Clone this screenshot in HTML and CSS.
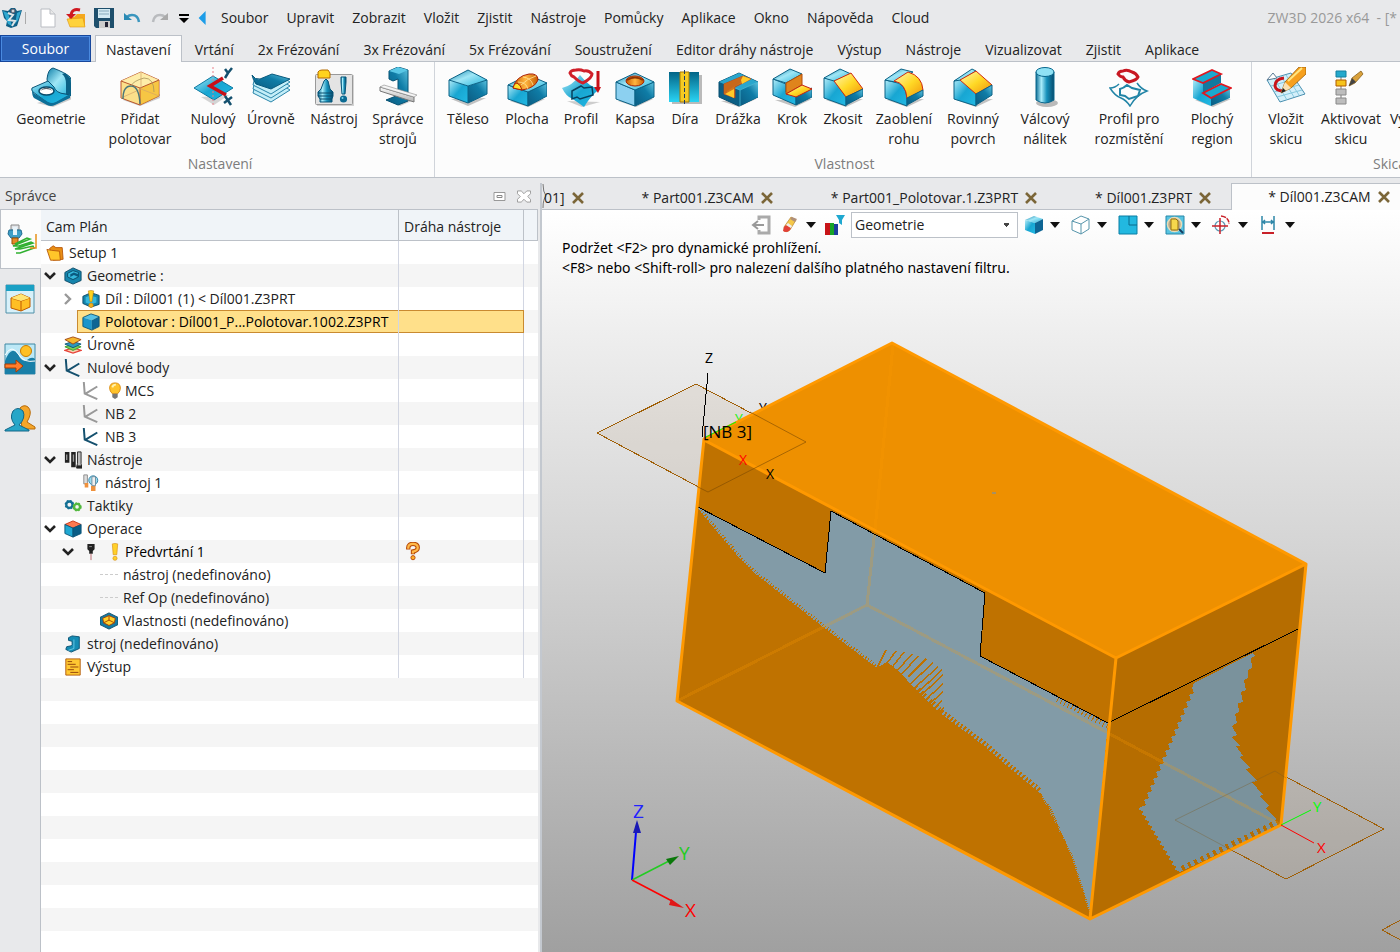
FILE: index.html
```html
<!DOCTYPE html>
<html lang="cs">
<head>
<meta charset="utf-8">
<title>ZW3D 2026 x64</title>
<link rel="stylesheet" href="styles.css">
</head>
<body>
<svg class="defs" aria-hidden="true">
  <defs>
    <linearGradient id="gt" x1="0" y1="0" x2="1" y2="1"><stop offset="0" stop-color="#0f7fa8"/><stop offset=".45" stop-color="#9fe6f6"/><stop offset="1" stop-color="#22b4dc"/></linearGradient>
    <linearGradient id="gl" x1="0" y1="0" x2="1" y2="1"><stop offset="0" stop-color="#b4ecf8"/><stop offset=".5" stop-color="#18a6d2"/><stop offset="1" stop-color="#22b9e4"/></linearGradient>
    <linearGradient id="gr" x1="0" y1="1" x2="1" y2="0"><stop offset="0" stop-color="#0b5c82"/><stop offset=".6" stop-color="#0f7ca6"/><stop offset="1" stop-color="#5ec4e0"/></linearGradient>
    <linearGradient id="gy" x1="0" y1="0" x2="1" y2="1"><stop offset="0" stop-color="#fff6b8"/><stop offset=".5" stop-color="#ffd926"/><stop offset="1" stop-color="#f0900a"/></linearGradient>
    <linearGradient id="go" x1="0" y1="0" x2="1" y2="0"><stop offset="0" stop-color="#c85a00"/><stop offset=".5" stop-color="#ffb640"/><stop offset="1" stop-color="#c65a00"/></linearGradient>
    <linearGradient id="gcyl" x1="0" y1="0" x2="1" y2="0"><stop offset="0" stop-color="#0f6e96"/><stop offset=".3" stop-color="#a8ecfa"/><stop offset=".6" stop-color="#1590ba"/><stop offset="1" stop-color="#074c6e"/></linearGradient>
    <linearGradient id="gv" x1="0" y1="0" x2="0" y2="1"><stop offset="0" stop-color="#036486"/><stop offset="1" stop-color="#2ad4f4"/></linearGradient>
    <linearGradient id="gm" x1="0" y1="0" x2="0" y2="1"><stop offset="0" stop-color="#fafafa"/><stop offset="1" stop-color="#b4b4b4"/></linearGradient>

    <symbol id="i-geom" viewBox="0 0 40 40"><path d="M6 36l16 4 19-8-3-5z" fill="#999" opacity=".5"/><path d="M16 12Q17 2 22 1q13 5 17 9 2 3 1 18l-14-2-9-8z" fill="url(#gt)" stroke="#0b5678"/><path d="M34 6q6 4 6 10v13l-5 2V17q0-7-4-10z" fill="#0a6186"/><path d="M1 21l16-7 6 6q2 6 11 7l5 1-14 8q-4 2-8 0L2 25q-2-2-1-4z" fill="url(#gl)" stroke="#0b5678"/><path d="M1 23q1 3 3 4l13 8q4 2 8 0l14-8v4l-15 7q-4 2-8 0L3 31q-2-2-2-8z" fill="#0d6f98"/><ellipse cx="15.500" cy="24" rx="7.500" ry="4" fill="#fff" stroke="#084a6a" stroke-width="1.500"/><path d="M9 24q6-7 13 0-7-4-13 0z" fill="#55606a"/></symbol>
    <symbol id="i-stock" viewBox="0 0 40 40"><path d="M3 33l17 6 20-8v-4z" fill="#999" opacity=".5"/><path d="M1 14L21 5l18 8v16l-19 9L1 31z" fill="#fbe08a" stroke="#b9552c"/><path d="M20 21l19-8v16l-19 9z" fill="#f4bd2c" opacity=".75"/><path d="M1 14L21 5l18 8-19 8z" fill="#fff0b0" opacity=".8"/><path d="M1 14l19 7 19-8M20 21v17" fill="none" stroke="#b9552c"/><path d="M21 5v17L1 31M21 22l18 7" fill="none" stroke="#d6a468" stroke-width=".7"/><path d="M3 32q0-13 8-13t9 18" fill="none" stroke="#49777a" stroke-width="1.400"/><path d="M11 19q2-5 13-8 10 0 10 14" fill="none" stroke="#a8945c" stroke-width=".8"/></symbol>
    <symbol id="i-datum" viewBox="0 0 40 40"><path d="M8 30l13 8 15-10z" fill="#999" opacity=".4"/><path d="M1 21L20 9l20 12-19 12z" fill="url(#gl)" stroke="#0d7aa2"/><path d="M20 0v40" stroke="#e9808a" stroke-dasharray="2 2"/><path d="M30 11L17 19l16 9" fill="none" stroke="#c81018" stroke-width="3.500"/><path d="M32 2l3 4 4-5M35 6l-3 5M32 29l6 9M39 30l-8 6" fill="none" stroke="#14506e" stroke-width="2.500"/></symbol>
    <symbol id="i-levels" viewBox="0 0 40 40"><g stroke="#2a85aa" fill="#c4eef8"><path d="M2 26l18 9 19-12-3-2-33 1z"/><path d="M2 22l18 9 19-12-3-2-33 1z"/><path d="M2 18l18 9 19-12-3-2-33 1z"/></g><path d="M1 8q3 5 8 4l12-5 18 5-19 10L5 17Q2 13 1 8z" fill="url(#gr)" stroke="#0a5a7d"/></symbol>
    <symbol id="i-tool" viewBox="0 0 40 40"><rect x="3" y="8" width="37" height="31" fill="#aaa" opacity=".5"/><rect x="1.500" y="7.500" width="37" height="30" rx="1" fill="#e4e4e4" stroke="#999"/><path d="M10 14l2-2 2 2 2 8 3 3v4l-1 3v3H6v-3l-2-3v-4l3-3z" fill="url(#gcyl)" stroke="#07567a"/><path d="M4 26h15M4 29h15M6 32h12" stroke="#0a4c6c"/><path d="M4 5q1-2 4-2h6l2 3v5H4z" fill="#ffd21e" stroke="#b66c00"/><path d="M27 10h5v5l-1 12h-3l-1-12z" fill="url(#gcyl)" stroke="#07567a"/><circle cx="29.500" cy="32" r="3.600" fill="#0c6a92"/><circle cx="28.500" cy="31" r="1" fill="#7cd6ee"/></symbol>
    <symbol id="i-machine" viewBox="0 0 40 40"><path d="M8 33l14 6 14-6z" fill="#999" opacity=".5"/><path d="M11 4l9-4 10 3v31l-10 4-12-5 10-4 2-2V12l-5 2-4-2z" fill="url(#gr)" stroke="#075274"/><path d="M11 4l9-4 10 3-9 4z" fill="#5ac8e6"/><path d="M2 20l34 10v5L2 24z" fill="url(#gm)" stroke="#777"/><path d="M2 20l4-2 33 10-3 2z" fill="#f5f5f5" stroke="#888" stroke-width=".6"/></symbol>

    <symbol id="i-box" viewBox="0 0 40 40"><path d="M3 32l17 7 18-8z" fill="#888" opacity=".5"/><path d="M1 13v16l19 7V19z" fill="url(#gl)"/><path d="M20 19v17l19-9V13z" fill="url(#gr)"/><path d="M1 13L20 3l19 10-19 6z" fill="url(#gt)"/><path d="M1 13L20 3l19 10v14l-19 9-19-7zl19 6 19-6M20 19v17" fill="none" stroke="#0b6286"/></symbol>
    <symbol id="i-surface" viewBox="0 0 40 40"><path d="M3 34l18 6 17-8z" fill="#888" opacity=".5"/><path d="M1 18v14l20 7V25z" fill="url(#gl)" stroke="#0b6286"/><path d="M21 25v14l19-10V16z" fill="url(#gr)" stroke="#0b6286"/><path d="M1 18L21 8l19 8-19 9z" fill="url(#gt)" stroke="#0b6286"/><path d="M6 21Q9 9 22 7q9-1 9 6-3 8-16 10z" fill="url(#go)" stroke="#aa1f08"/><path d="M11 15q8 0 10 7M16 10q8 1 10 8M14 18q7-7 15-9" fill="none" stroke="#ffe49a" stroke-width=".8"/><path d="M6 21q1-5 4-5 4 2 5 7z" fill="#ffe228" stroke="#aa1f08"/></symbol>
    <symbol id="i-profile" viewBox="0 0 40 40"><path d="M6 34l15 6 18-5z" fill="#888" opacity=".4"/><path d="M1 21q10-2 18-13 10 13 20 14-8 5-16 18-8-6-13-9-5-2-9-10z" fill="url(#gl)"/><path d="M11 24l9-5 3 2 8-1 1 8-13 4-3-2-5 2z" fill="none" stroke="#07405e" stroke-width="1.500"/><path d="M15 3q-5 0-6 3 1 3 4 4 5 5 9 6 9-5 9-9-3-4-8-3-4-2-8-1z" fill="none" stroke="#d0202a" stroke-width="3"/><path d="M37 4v18" stroke="#c81018" stroke-width="3"/><path d="M33 20h7l-3 6z" fill="#c81018"/></symbol>
    <symbol id="i-pocket" viewBox="0 0 40 40"><path d="M3 34l18 6 17-8z" fill="#888" opacity=".5"/><path d="M1 15v17l19 7V23z" fill="#8cd0f0" stroke="#0b6286"/><path d="M20 23v16l19-9V15z" fill="url(#gr)" stroke="#0b6286"/><path d="M1 15L20 6l19 9-19 8z" fill="url(#gt)" stroke="#0b6286"/><ellipse cx="20" cy="14" rx="9" ry="5" fill="url(#go)" stroke="#a82000"/><path d="M12 13q8-5 16 0" fill="none" stroke="#8e3300" stroke-width="2"/></symbol>
    <symbol id="i-hole" viewBox="0 0 40 40"><path d="M7 8h30v29H7z" fill="#777" opacity=".5"/><path d="M4 5h30v30H4z" fill="url(#gv)"/><path d="M15 5h9v30h-9z" fill="#f5ca22" stroke="#a87900"/><path d="M19.500 3v35" stroke="#1d3a64" stroke-dasharray="4 2"/></symbol>
    <symbol id="i-slot" viewBox="0 0 40 40"><path d="M3 34l18 6 17-8z" fill="#888" opacity=".5"/><path d="M1 15L21 6l19 9v15l-19 9-20-9z" fill="#0b5f84" stroke="#084f70"/><path d="M1 15L21 6l19 9-18 8-6-2V31l-10-4V17z" fill="#2aa6cc"/><path d="M22 23l18-8v15l-18 9z" fill="url(#gr)"/><path d="M6 17l19-8 8 3-16 8v11L6 27z" fill="#d0751c" stroke="#b5401a" stroke-width=".8"/><path d="M6 17l19-8v5L9 24v4l-3-1z" fill="#c8681a"/><path d="M7 27l9-5v9zM25 9l8 3-9 5-1-4z" fill="#ffc928"/><path d="M22 23v16M17 21l5 2 18-8" fill="none" stroke="#4cbcd8" stroke-width=".8"/></symbol>
    <symbol id="i-step" viewBox="0 0 40 40"><path d="M3 33l20 7 17-8z" fill="#888" opacity=".5"/><path d="M1 12v16l23 10v-9L14 25V17z" fill="url(#gl)" stroke="#0b6286"/><path d="M1 12L18 2l12 5-16 9z" fill="url(#gt)" stroke="#0b6286"/><path d="M24 29v9l16-8v-9z" fill="url(#gr)" stroke="#0b6286"/><path d="M14 16l16-9v11l-16 9z" fill="#df841c" stroke="#b44c08"/><path d="M14 27l16-9 10 4-16 8z" fill="url(#gy)" stroke="#c52010"/></symbol>
    <symbol id="i-chamfer" viewBox="0 0 40 40"><path d="M3 33l20 7 17-8z" fill="#888" opacity=".5"/><path d="M1 11v20l22 8v-9L11 13z" fill="url(#gl)" stroke="#0b6286"/><path d="M1 11L17 2l11 5-17 7z" fill="url(#gt)" stroke="#0b6286"/><path d="M11 14l17-8 12 16-17 8z" fill="url(#gy)" stroke="#d02a10"/><path d="M23 30l17-8v7l-17 9z" fill="url(#gr)" stroke="#0b6286"/></symbol>
    <symbol id="i-fillet" viewBox="0 0 40 40"><path d="M3 33l20 7 17-8z" fill="#888" opacity=".5"/><path d="M1 13v18l22 8v-9q-2-14-13-15z" fill="url(#gl)" stroke="#0b6286"/><path d="M1 13L17 2l12 3-18 10z" fill="url(#gt)" stroke="#0b6286"/><path d="M10 14l14-9q14 4 15 18l-16 9q-1-16-13-18z" fill="url(#gy)" stroke="#d02a10"/><path d="M23 31l16-8v6l-16 9z" fill="url(#gr)" stroke="#0b6286"/></symbol>
    <symbol id="i-plane" viewBox="0 0 40 40"><path d="M3 33l20 7 17-8z" fill="#888" opacity=".5"/><path d="M1 14v18l22 7V26L8 11z" fill="url(#gl)" stroke="#0b6286"/><path d="M1 14L19 2l4 2L8 13z" fill="url(#gt)" stroke="#0b6286"/><path d="M7 13L23 4l16 14-16 9z" fill="url(#gy)" stroke="#d02a10"/><path d="M23 27l16-9v10l-16 10z" fill="url(#gr)" stroke="#0b6286"/></symbol>
    <symbol id="i-boss" viewBox="0 0 40 40"><ellipse cx="22" cy="36" rx="11" ry="4" fill="#777" opacity=".5"/><path d="M11 5v28q9 6 18 0V5z" fill="url(#gcyl)" stroke="#08668c"/><ellipse cx="20" cy="5" rx="9" ry="4.500" fill="#8fe2f5" stroke="#08668c"/></symbol>
    <symbol id="i-pattern" viewBox="0 0 40 40"><path d="M10 17q-4 4-9 4 5 8 11 10 5 2 9 8 6-11 17-15-6-2-10-8" fill="none" stroke="#2184a6" stroke-width="1.500"/><path d="M11 22q4-1 7-4l5 3 8 2-2 6-9 3-4-3-5-1z" fill="none" stroke="#2184a6" stroke-width="2"/><path d="M14 4q-4 0-5 3 2 3 5 3 2 4 6 5 8-2 9-5-2-4-6-5-5-3-9-1z" fill="none" stroke="#c81822" stroke-width="3"/></symbol>
    <symbol id="i-flat" viewBox="0 0 40 40"><path d="M3 33l18 7 18-8z" fill="#888" opacity=".5"/><path d="M1 12v19l18 8v-9l-8-4V16z" fill="url(#gl)"/><path d="M19 30v9l19-8V21z" fill="url(#gr)"/><path d="M11 16l18-9v9L11 26z" fill="#12799f"/><path d="M1 12L20 3l9 4-18 9zM11 26l18-9 10 4-20 10z" fill="#1aa9cf" stroke="#e01820" stroke-width="1.800"/></symbol>
    <symbol id="i-sketch" viewBox="0 0 40 40"><path d="M1 13l24-7 14 21-25 8z" fill="#d4effa" stroke="#4a90b0"/><path d="M5 19l24-7M8 25l25-7M11 30l25-7M8 11l13 22M15 9l13 21M20 8l13 20" stroke="#86c8de" fill="none"/><path d="M1 13l6-7 4 5z" fill="#fff" stroke="#5a7a94"/><path d="M18 11q-9 1-9 8 1 5 8 5" fill="none" stroke="#c8141c" stroke-width="3"/><path d="M15 26l4-11L33 0h7v7L25 21z" fill="#f6a01e" stroke="#8c5200" stroke-width=".7"/><path d="M19 15l6 6-10 5z" fill="#fbe1b2"/><path d="M15 26l2-5 3 3z" fill="#222"/><path d="M22 14L36 1" stroke="#ffe680" stroke-width="2"/></symbol>
    <symbol id="i-activate" viewBox="0 0 40 40"><path d="M10 8v26" stroke="#777"/><path d="M5 4h10v6H5z" fill="#25a9cc" stroke="#1580a0"/><path d="M5 13h10v6H5z" fill="#f6c41c" stroke="#b05a00"/><path d="M5 22h10v6H5zM5 31h10v6H5z" fill="#bdbdbd" stroke="#888"/><path d="M18 19l3-8 9-7 2 3-8 9z" fill="#d9a13c" stroke="#7c5410" stroke-width=".7"/><path d="M18 19l3-8 4 4z" fill="#444"/></symbol>

    <symbol id="s-folder" viewBox="0 0 20 20"><path d="M4 5l4-3 3 2h7l1 13-11 1z" fill="#e88e14" stroke="#b8580a"/><path d="M1 6l5 1 9 1 1 10H5z" fill="#ffc62a" stroke="#b8580a"/></symbol>
    <symbol id="s-part" viewBox="0 0 20 20"><path d="M1 6l9-5 9 4v10l-9 4-9-4z" fill="#1584ac" stroke="#0a4865"/><path d="M4 7l6-3 6 2v5l-6 3-6-3z" fill="#36b8dc" stroke="#0a4865"/><path d="M7 8l4-2 5 2v3l-5-2-4 2z" fill="#0a5a80"/></symbol>
    <symbol id="s-warnpart" viewBox="0 0 20 20"><path d="M1 7l9-4 9 3v10l-9 3-9-4z" fill="#1584ac" stroke="#0a4865"/><path d="M4 8l5-2 7 2v6l-6 2-6-2z" fill="#36b8dc"/><path d="M7 1q3-1 6 0l-2 12H9z" fill="#ffd21e" stroke="#c07a00" stroke-width=".6"/><circle cx="10" cy="17" r="2.500" fill="#f3b01c" stroke="#c07a00" stroke-width=".6"/></symbol>
    <symbol id="s-cube" viewBox="0 0 20 20"><path d="M1 5l9-4 9 3-8 4z" fill="#56c1e6"/><path d="M1 5l10 3v11L1 15z" fill="#1a95cc"/><path d="M11 8l8-4v11l-8 4z" fill="#0d6594"/><path d="M1 5l9-4 9 3v11l-8 4-10-4z" fill="none" stroke="#0b5578"/></symbol>
    <symbol id="s-levels" viewBox="0 0 20 20"><path d="M1 16l9-3 9 3-9 3z" fill="#f8d0b0" stroke="#e8443a" stroke-width="1.500"/><path d="M1 12l9-3 9 3-9 4z" fill="#7ad05c" stroke="#3a9a2c"/><path d="M1 9l9-3 9 3-9 4z" fill="#2c98c0" stroke="#0e5878"/><path d="M1 4l9-3 9 3-9 5z" fill="#f5b62e" stroke="#a04410"/></symbol>
    <symbol id="s-axis" viewBox="0 0 20 20"><path d="M2 0l1 13 14 6M4 13l13-8" fill="none" stroke="currentColor" stroke-width="2.200"/></symbol>
    <symbol id="s-bulb" viewBox="0 0 14 20"><path d="M7 1q6 0 6 6 0 3-3 6H4Q1 10 1 7q0-6 6-6z" fill="#ffc32a" stroke="#d98a10"/><path d="M4 6q1-3 4-3" stroke="#fff2b0" stroke-width="2" fill="none"/><path d="M4 13h6v4l-3 2-3-2z" fill="#777"/></symbol>
    <symbol id="s-tools" viewBox="0 0 20 20"><path d="M1 1h5v12H1zM8 1h5v17H8z" fill="#222"/><path d="M3 4v6M10.500 4v8" stroke="#999" stroke-width="1.500"/><path d="M15 1h4v13l1 5h-6l1-5z" fill="#bbb" stroke="#222"/><path d="M14 16h6v3h-6z" fill="#222"/></symbol>
    <symbol id="s-tool" viewBox="0 0 20 20"><path d="M2 1h4v10H2z" fill="#ddd" stroke="#888"/><path d="M3 10h4v5H3zM10 13h5v6h-5z" fill="#ef913c"/><circle cx="12.500" cy="7" r="5" fill="#9cdcf0" stroke="#2a7da4"/><path d="M11 3h4v10h-4z" fill="#eee" stroke="#6a8a9c"/></symbol>
    <symbol id="s-gears" viewBox="0 0 20 20"><circle cx="6" cy="8.500" r="3.500" fill="none" stroke="#147094" stroke-width="2.600"/><circle cx="6" cy="8.500" r="4.600" fill="none" stroke="#147094" stroke-width="1.400" stroke-dasharray="2 1.600"/><circle cx="14.500" cy="11" r="3.300" fill="none" stroke="#52b83e" stroke-width="2.600"/><circle cx="14.500" cy="11" r="4.400" fill="none" stroke="#52b83e" stroke-width="1.400" stroke-dasharray="2 1.600"/></symbol>
    <symbol id="s-oper" viewBox="0 0 20 20"><path d="M1 5l9-4 9 4-9 4z" fill="#ff7a50" stroke="#c8300e"/><path d="M1 5l9 4v10l-9-4z" fill="#20a8d2" stroke="#0b5578"/><path d="M10 9l9-4v10l-9 4z" fill="#0a5d86" stroke="#0b5578"/></symbol>
    <symbol id="s-drill" viewBox="0 0 20 20"><path d="M6 1h8v6l-2 2v3H8V9L6 7z" fill="#222"/><path d="M8 4h3" stroke="#999"/><path d="M10 12v7" stroke="#b86066"/></symbol>
    <symbol id="s-excl" viewBox="0 0 10 20"><path d="M2 1q3-1 6 0L7 13H3z" fill="#ffd02a" stroke="#d99010" stroke-width=".7"/><circle cx="5" cy="17" r="2.300" fill="#ffd02a" stroke="#d99010" stroke-width=".7"/></symbol>
    <symbol id="s-feat" viewBox="0 0 20 20"><path d="M0 6l10-5 10 5v8l-10 5-10-5z" fill="#147ba4" stroke="#0a4865"/><path d="M3 7l7-3 7 3-1 5-6 3-6-3z" fill="#ffd028" stroke="#a03c00"/><path d="M4 12l6-3 6 3M10 4v5" fill="none" stroke="#a03c00"/></symbol>
    <symbol id="s-mach" viewBox="0 0 20 20"><path d="M5 3l4-2 8 1v13l-9 4-6-3 1-3 5-1 1-1V7L5 6z" fill="#158cb4" stroke="#084f70"/><path d="M11 5v10l-6 2" stroke="#6acbe6" fill="none"/></symbol>
    <symbol id="s-out" viewBox="0 0 20 20"><path d="M2 1h16v18H2z" fill="#ffc832" stroke="#b0580a"/><path d="M4 4h5M4 7h9M7 10h9M4 13h7M7 16h9" stroke="#8c3a08"/></symbol>
    <symbol id="s-quest" viewBox="0 0 16 20"><path d="M3 8V6q0-4 5-4t5 4q0 3-5 4v3" fill="none" stroke="#b84a08" stroke-width="4.600"/><circle cx="8" cy="16.500" r="2.200" fill="#ffb02a" stroke="#b84a08"/><path d="M3 7V6q0-4 5-4t5 4q0 3-5 4v2" fill="none" stroke="#ffb848" stroke-width="2.400"/></symbol>
    <symbol id="s-down" viewBox="0 0 12 8"><path d="M1 1l5 5 5-5" fill="none" stroke="#222" stroke-width="2.600"/></symbol>
    <symbol id="s-right" viewBox="0 0 8 12"><path d="M1 1l5 5-5 5" fill="none" stroke="#999" stroke-width="2.400"/></symbol>
    <symbol id="s-x" viewBox="0 0 12 12"><path d="M1 1l10 10M11 1L1 11" stroke="#7b6638" stroke-width="2.600"/></symbol>
    <symbol id="s-caret" viewBox="0 0 10 6"><path d="M0 0h10L5 6z" fill="#111"/></symbol>
  </defs>
</svg>

<div class="app">
  <header class="titlebar">
    <div class="quick">
      <svg class="logo" viewBox="0 0 20 20"><path d="M0 2l6 1 3-3h4l2 3 5-1-3 10-2 6-6 2-5-2 1-5-3-3z" fill="#0f5f86"/><path d="M1 3l5 2 4 13-4-2zM15 5l4-2-3 9-3 4z" fill="#2fa8d0"/><path d="M6 5l5 2-4 5 6 1-3 5" fill="none" stroke="#dfe4e6" stroke-width="2"/><circle cx="11" cy="3" r="2" fill="#cfd6da" stroke="#556"/></svg>
      <span class="sep"></span>
      <button aria-label="Nový"><svg viewBox="0 0 20 20"><path d="M3 1h9l5 5v13H3z" fill="#fff" stroke="#b9bcc2"/><path d="M12 1v5h5" fill="#e8e8e8" stroke="#b9bcc2"/></svg></button>
      <button aria-label="Otevřít"><svg viewBox="0 0 20 20"><path d="M3 9h5l3-3h8v12H4z" fill="#f5a81e"/><path d="M1 11l16-1 2 9H4z" fill="#ffd23c" stroke="#dc9414" stroke-width=".6"/><path d="M14 2Q6 0 5 7" stroke="#d01820" stroke-width="3" fill="none"/><path d="M0 6h10l-5 5z" fill="#d01820"/></svg></button>
      <button aria-label="Uložit"><svg viewBox="0 0 20 20"><path d="M0 0h20v20H2l-2-2z" fill="#1e4f6c"/><path d="M4 1h12v9H4z" fill="#d4eaf2"/><path d="M5 3h10M5 6h10" stroke="#8ab"/><path d="M5 13h11v7H5z" fill="#ccc"/><path d="M11 14h3v5h-3z" fill="#223"/></svg></button>
      <button aria-label="Zpět"><svg viewBox="0 0 20 20"><path d="M17 14q-1-7-7-7-3 0-5 2" fill="none" stroke="#3a96be" stroke-width="2.500"/><path d="M2 5v7h8z" fill="#2a8ab4"/></svg></button>
      <button aria-label="Znovu"><svg viewBox="0 0 20 20"><path d="M3 14q1-7 7-7 3 0 5 2" fill="none" stroke="#b9bbbe" stroke-width="2.500"/><path d="M18 5v7h-8z" fill="#aaa"/></svg></button>
      <button class="narrow" aria-label="Přizpůsobit panel"><svg viewBox="0 0 12 12"><path d="M1 2h10v2H1zM1 6h10l-5 5z" fill="#000"/></svg></button>
      <button class="narrow" aria-label="Skrýt nabídku"><svg viewBox="0 0 12 16"><path d="M9 0v16L1 8z" fill="#1d9de8"/></svg></button>
    </div>
    <nav class="menu">
      <button>Soubor</button><button>Upravit</button><button>Zobrazit</button><button>Vložit</button><button>Zjistit</button><button>Nástroje</button><button>Pomůcky</button><button>Aplikace</button><button>Okno</button><button>Nápověda</button><button>Cloud</button>
    </nav>
    <div class="title">ZW3D 2026 x64 &nbsp;- [*</div>
  </header>

  <nav class="tabs">
    <button class="file">Soubor</button>
    <button class="active">Nastavení</button><button>Vrtání</button><button>2x Frézování</button><button>3x Frézování</button><button>5x Frézování</button><button>Soustružení</button><button>Editor dráhy nástroje</button><button>Výstup</button><button>Nástroje</button><button>Vizualizovat</button><button>Zjistit</button><button>Aplikace</button>
  </nav>

  <section class="ribbon">
    <div class="group g1">
      <div class="tools">
        <button class="w90"><svg><use href="#i-geom"/></svg>Geometrie</button>
        <button class="w88"><svg><use href="#i-stock"/></svg>Přidat<br>polotovar</button>
        <button class="w58"><svg><use href="#i-datum"/></svg>Nulový<br>bod</button>
        <button class="w58"><svg><use href="#i-levels"/></svg>Úrovně</button>
        <button class="w68"><svg><use href="#i-tool"/></svg>Nástroj</button>
        <button class="w60"><svg><use href="#i-machine"/></svg>Správce<br>strojů</button>
      </div>
      <div class="caption">Nastavení</div>
    </div>
    <div class="group g2">
      <div class="tools">
        <button class="w60"><svg><use href="#i-box"/></svg>Těleso</button>
        <button class="w58"><svg><use href="#i-surface"/></svg>Plocha</button>
        <button class="w50"><svg><use href="#i-profile"/></svg>Profil</button>
        <button class="w58"><svg><use href="#i-pocket"/></svg>Kapsa</button>
        <button class="w42"><svg><use href="#i-hole"/></svg>Díra</button>
        <button class="w64"><svg><use href="#i-slot"/></svg>Drážka</button>
        <button class="w44"><svg><use href="#i-step"/></svg>Krok</button>
        <button class="w58"><svg><use href="#i-chamfer"/></svg>Zkosit</button>
        <button class="w64"><svg><use href="#i-fillet"/></svg>Zaoblení<br>rohu</button>
        <button class="w74"><svg><use href="#i-plane"/></svg>Rovinný<br>povrch</button>
        <button class="w70"><svg><use href="#i-boss"/></svg>Válcový<br>nálitek</button>
        <button class="w98"><svg><use href="#i-pattern"/></svg>Profil pro<br>rozmístění</button>
        <button class="w68"><svg><use href="#i-flat"/></svg>Plochý<br>region</button>
      </div>
      <div class="caption">Vlastnost</div>
    </div>
    <div class="group g3">
      <div class="tools">
        <button class="w60"><svg><use href="#i-sketch"/></svg>Vložit<br>skicu</button>
        <button class="w70"><svg><use href="#i-activate"/></svg>Aktivovat<br>skicu</button>
        <button class="cut">Vy</button>
      </div>
      <div class="caption">Skica</div>
    </div>
  </section>

  <main class="work">
    <aside class="manager">
      <div class="panel-title"><h2>Správce</h2>
        <button aria-label="Plovoucí"><svg viewBox="0 0 16 12"><path d="M2 2h11v8H2z" fill="#fff" stroke="#999"/><path d="M5 5h5v2H5z" fill="none" stroke="#888"/></svg></button>
        <button aria-label="Zavřít"><svg viewBox="0 0 16 14"><path d="M1 1h4l3 3 3-3h4v3l-3 3 3 3v3h-4l-3-3-3 3H1v-3l3-3-3-3z" fill="#fff" stroke="#999"/></svg></button>
      </div>
      <div class="panel-body">
        <nav class="side">
          <button class="on" aria-label="Cam plán"><svg viewBox="0 0 32 32"><path d="M6 2h8v5H6z" fill="#e4e6ea" stroke="#888"/><path d="M4 7h12l1 4-3 4H6l-3-4z" fill="#3f9fc8" stroke="#216c90"/><path d="M8 4h4v8H8z" fill="#e8f4fa"/><path d="M7 15h6v6H7z" fill="#e58a28" stroke="#9c4d00"/><path d="M10 21l12-6 3 1-17 7h6l12-4 2 1-18 6h5l13-3 1 2-14 5h-4" fill="none" stroke="#30b030" stroke-width="1.500"/><path d="M25 25h6V11" fill="none" stroke="#e89018" stroke-width="1.500"/></svg></button>
          <button aria-label="Zobrazení"><svg viewBox="0 0 32 32"><path d="M2 2h28v28H2z" fill="#d8f1fa" stroke="#5090a8"/><path d="M2 2h28v6H2z" fill="#1aa0c4"/><path d="M7 15l10-4 9 4v9l-9 4-10-3z" fill="#ffbf24" stroke="#c05a00"/><path d="M7 15l10 3 9-3M17 18v10" stroke="#c05a00" fill="none"/><path d="M7 15l10-4 9 4-9 3z" fill="#ffe574"/></svg></button>
          <button aria-label="Vizuální správce"><svg viewBox="0 0 32 32"><path d="M1 1h30v30H1z" fill="#bce8f6" stroke="#3f88a4"/><path d="M1 18q6-16 13-7 4 9 9 6 5-4 8-1v15H1z" fill="#187fa8"/><path d="M1 12q7-12 14 0 5 8 16 6" fill="none" stroke="#fff"/><circle cx="22" cy="8" r="5.500" fill="#ffc024" stroke="#c97c00"/><path d="M1 21h11v-4l7 6-7 6v-4H1z" fill="#ff7d2c" stroke="#a83c00"/></svg></button>
          <button aria-label="Role"><svg viewBox="0 0 32 32"><path d="M16 5q4-4 8-1 4 4 1 11l-2 4 8 5v2H18z" fill="#f4a62a" stroke="#b86b08"/><path d="M9 8q5-5 10 0 3 7-4 14l10 5v1H1v-1l10-5q-6-7-2-14z" fill="#27a6c8" stroke="#126687"/></svg></button>
        </nav>
        <div class="tree">
          <table>
            <thead><tr><th class="c1">Cam Plán</th><th class="c2">Dráha nástroje</th><th></th></tr></thead>
            <tbody>
              <tr><td><div class="row root"><svg class="ic"><use href="#s-folder"/></svg>Setup 1</div></td><td></td><td></td></tr>
              <tr><td><div class="row l1"><svg class="dn"><use href="#s-down"/></svg><svg class="ic"><use href="#s-part"/></svg>Geometrie :</div></td><td></td><td></td></tr>
              <tr><td><div class="row l2"><svg class="rt"><use href="#s-right"/></svg><svg class="ic"><use href="#s-warnpart"/></svg>Díl : Díl001 (1) &lt; Díl001.Z3PRT</div></td><td></td><td></td></tr>
              <tr class="sel"><td><div class="row"><svg class="ic"><use href="#s-cube"/></svg>Polotovar : Díl001_P...Polotovar.1002.Z3PRT</div></td><td></td><td></td></tr>
              <tr><td><div class="row l1"><i></i><svg class="ic"><use href="#s-levels"/></svg>Úrovně</div></td><td></td><td></td></tr>
              <tr><td><div class="row l1"><svg class="dn"><use href="#s-down"/></svg><svg class="ic navy"><use href="#s-axis"/></svg>Nulové body</div></td><td></td><td></td></tr>
              <tr><td><div class="row l2"><i></i><svg class="ic gray"><use href="#s-axis"/></svg><svg class="bulb"><use href="#s-bulb"/></svg>MCS</div></td><td></td><td></td></tr>
              <tr><td><div class="row l2"><i></i><svg class="ic gray"><use href="#s-axis"/></svg>NB 2</div></td><td></td><td></td></tr>
              <tr><td><div class="row l2"><i></i><svg class="ic navy"><use href="#s-axis"/></svg>NB 3</div></td><td></td><td></td></tr>
              <tr><td><div class="row l1"><svg class="dn"><use href="#s-down"/></svg><svg class="ic"><use href="#s-tools"/></svg>Nástroje</div></td><td></td><td></td></tr>
              <tr><td><div class="row l2"><i></i><svg class="ic"><use href="#s-tool"/></svg>nástroj 1</div></td><td></td><td></td></tr>
              <tr><td><div class="row l1"><i></i><svg class="ic"><use href="#s-gears"/></svg>Taktiky</div></td><td></td><td></td></tr>
              <tr><td><div class="row l1"><svg class="dn"><use href="#s-down"/></svg><svg class="ic"><use href="#s-oper"/></svg>Operace</div></td><td></td><td></td></tr>
              <tr class="cur"><td><div class="row l2"><svg class="dn"><use href="#s-down"/></svg><svg class="ic"><use href="#s-drill"/></svg><svg class="bulb"><use href="#s-excl"/></svg>Předvrtání 1</div></td><td><svg class="quest"><use href="#s-quest"/></svg></td><td></td></tr>
              <tr><td><div class="row l3"><i></i><b></b>nástroj (nedefinováno)</div></td><td></td><td></td></tr>
              <tr><td><div class="row l3"><i></i><b></b>Ref Op (nedefinováno)</div></td><td></td><td></td></tr>
              <tr><td><div class="row l3"><i></i><svg class="ic"><use href="#s-feat"/></svg>Vlastnosti (nedefinováno)</div></td><td></td><td></td></tr>
              <tr><td><div class="row l1"><i></i><svg class="ic"><use href="#s-mach"/></svg>stroj (nedefinováno)</div></td><td></td><td></td></tr>
              <tr><td><div class="row l1"><i></i><svg class="ic"><use href="#s-out"/></svg>Výstup</div></td><td></td><td></td></tr>
            </tbody>
          </table>
          <div class="stripes"></div>
        </div>
      </div>
    </aside>

    <section class="docs">
      <nav class="doctabs">
        <svg class="chev" viewBox="0 0 6 26"><path d="M1 1q0 8 3 12-3 3-3 12" fill="none" stroke="#777"/></svg>
        <div class="doc first"><a href="#p1">01]</a><button aria-label="Zavřít"><svg><use href="#s-x"/></svg></button></div>
        <div class="doc"><a href="#p2">* Part001.Z3CAM</a><button aria-label="Zavřít"><svg><use href="#s-x"/></svg></button></div>
        <div class="doc"><a href="#p3">* Part001_Polotovar.1.Z3PRT</a><button aria-label="Zavřít"><svg><use href="#s-x"/></svg></button></div>
        <div class="doc"><a href="#p4">* Díl001.Z3PRT</a><button aria-label="Zavřít"><svg><use href="#s-x"/></svg></button></div>
        <div class="doc active"><a href="#p5">* Díl001.Z3CAM</a><button aria-label="Zavřít"><svg><use href="#s-x"/></svg></button></div>
      </nav>
      <div class="view">
        <svg class="scene" viewBox="542 210 858 742" preserveAspectRatio="xMinYMin slice">
          <g class="glyph"><text x="735" y="424" font-size="14" fill="#0f0">Y</text><text x="759" y="413" font-size="14">Y</text></g>
          <path d="M597 433l99-49 110 58-98 50z" fill="#b8a080" fill-opacity=".16" stroke="#a06008" shape-rendering="crispEdges"/>
          <path d="M1175 820l100-49 109 58-98 50z" fill="#b8a080" fill-opacity=".16" stroke="#a06008" shape-rendering="crispEdges"/>
          <path d="M1410 915l-28 15 28 15z" fill="#b8a080" fill-opacity=".16" stroke="#a06008" shape-rendering="crispEdges"/>
          <g shape-rendering="crispEdges">
            <path d="M892 343l414 221-190 94-412-218z" fill="#ee9000"/>
            <path d="M704 440l412 218-26 261-413-218z" fill="#bf7200"/>
            <path d="M1116 658l190-94-25 261-191 94z" fill="#b66d00"/>
            <path d="M696 506L825 573 831 511 985 593 980 656 1108 723 1090 915 1083 893 1071 855 1040 793 1013 771 983 745 940 713 914 688 900 672 887 662 877 668 823 627 757 575 743 562 717 532z" fill="#829ba7"/>
            <path d="M700 511L717 532 743 562 757 575 823 627 877 668" fill="none" stroke="#bf7200" stroke-width="6" stroke-dasharray="1 2"/>
            <path d="M914 688L940 713 983 745 1013 771 1040 793" fill="none" stroke="#bf7200" stroke-width="9" stroke-dasharray="2 2"/>
            <path d="M1040 793L1071 855 1083 893 1089 913M1048 804l19 45 18 52" fill="none" stroke="#bf7200" stroke-width="3" stroke-dasharray="1 1"/>
            <path d="M877 668l9-18M882 670l14-19M890 670l14-18M896 672l16-18M902 674l16-18M908 677l18-18M910 684l23-21M912 690l26-23M914 696l28-26M916 700l27-25M922 703l21-19M926 707l17-15M931 711l11-10M938 713l6-5" stroke="#bf7200" stroke-width="1.500"/>
            <path d="M1058 698l50 27" stroke="#bf7200" stroke-width="8" stroke-dasharray="1 3"/>
            <path d="M980 656l128 67 3-32-125-66z" fill="#bf7200"/>
            <path d="M1194 683l59-30 2 3-4 2 1 10-4 2v8l-4 2 2 10-5 2 2 10-5 1 1 9-4 2 2 9-5 3 5 9-5 2 8 9h-4l7 10-4 1 11 11-4 1 11 12-5 1 11 13-4 1 10 9-3 3 11 12 3 5L1180 872l-6-3 3-2-6-3 3-2-6-3 3-2-6-3 3-2-6-3 3-2-6-3 3-2-6-3 3-2-6-3 3-2-6-3 3-2-6-3 3-2-6-3 3-2-6-3 3-2-6-3 3-2 5-2-2-5 5-2-2-5 5-2-2-5 5-2-2-5 5-2-2-5 5-2-2-5 5-2-2-5 5-2-2-5 5-2-2-5 5-2-2-5 5-2-2-5 5-2-2-5 5-2-2-5 5-2-2-5 5-2-2-5 5-2-2-5 5-2-2-5z" fill="#7a929c"/>
            <path d="M1182 869l96-47" fill="none" stroke="#b66d00" stroke-width="6" stroke-dasharray="3 4"/>
            <path d="M893 345l-15 155-11 105-190 96M867 605l414 220" fill="none" stroke="#ff9900" stroke-opacity=".22" stroke-width="3"/>
            <path d="M696 506l129 67 6-62 154 82-5 63 128 67 190-94" fill="none" stroke="#000"/>
          </g>
          <path d="M892 343l414 221-25 261-191 94-413-218 27-262zM704 440l412 218 190-94M1116 658l-26 261" fill="none" stroke="#ff9900" stroke-width="3" stroke-linejoin="round"/>
          <path d="M750 412l56 30-98 50-12-6" fill="none" stroke="#7c4a00" stroke-opacity=".6"/>
          <path d="M1286 778l-11-7-100 49 58 31" fill="none" stroke="#7c5a20" stroke-opacity=".35"/>
          <path d="M708 373l-6 64" stroke="#000" shape-rendering="crispEdges"/>
          <path d="M706 437l30-15M1281 825l30-15" stroke="#0f0"/><path d="M1281 825l33 18" stroke="#f00"/>
          <path d="M992 493h4" stroke="#a89060" stroke-width="2"/>
          <g class="glyph">
            <text x="705" y="363" font-size="14">Z</text><text x="703" y="438" font-size="17">[NB 3]</text>
            <text x="739" y="465" font-size="14" fill="#f00">X</text><text x="766" y="479" font-size="14">X</text>
            <text x="1313" y="812" font-size="15" fill="#0f0">Y</text><text x="1317" y="853" font-size="15" fill="#f00">X</text>
            <text x="633" y="818" font-size="19" fill="#22f">Z</text><text x="679" y="860" font-size="19" fill="#2c2">Y</text><text x="685" y="917" font-size="19" fill="#f00">X</text>
          </g>
          <path d="M632 880l4-48" stroke="#00f" stroke-width="2"/><path d="M637 820l-4 13h8z" fill="#1a1ab4"/>
          <path d="M632 880l37-19" stroke="#2c2" stroke-width="1.500"/><path d="M679 856l-13 3 4 6z" fill="#0a780a"/>
          <path d="M632 880l40 21" stroke="#f00" stroke-width="1.500"/><path d="M684 908l-13-9-2 6z" fill="#e01818"/>
        </svg>
        <div class="viewbar">
          <button aria-label="Konec"><svg viewBox="0 0 20 20"><path d="M8 5V2h10v16H8v-3" fill="none" stroke="#aaa" stroke-width="3"/><path d="M13 10H3M7 6l-5 4 5 4" fill="none" stroke="#999" stroke-width="2"/></svg></button>
          <button class="pair e1" aria-label="Guma"><svg viewBox="0 0 20 20"><path d="M4 12l7-10 5 3-6 10q-3 3-6 1z" fill="#f5c848" stroke="#a87428" stroke-width=".6"/><path d="M4 12l2-2 5 3-2 3q-3 2-6 0z" fill="#e24038"/><path d="M6 10l2-2 4 3-1 2z" fill="#eee"/><path d="M10 4l5 3 2-3-5-2z" fill="#b09078"/></svg><svg class="car"><use href="#s-caret"/></svg></button>
          <button class="pair" aria-label="Filtr"><svg viewBox="0 0 20 20"><path d="M0 8h5v12H0z" fill="#c81418"/><path d="M5 8h4v12H5z" fill="#18a428"/><path d="M9 9h4v11H9z" fill="#1c3f9c"/><path d="M11 0h9l-3 5v5l-3-2V5z" fill="#1fa8d0"/></svg></button>
          <select aria-label="Filtr výběru"><option>Geometrie</option></select>
          <button class="pair" aria-label="Stínované"><svg viewBox="0 0 20 20"><path d="M1 5l9-4 9 3-8 4z" fill="url(#gt)"/><path d="M1 5l10 3v11L1 15z" fill="url(#gl)"/><path d="M11 8l8-4v11l-8 4z" fill="#0d6594"/></svg><svg class="car"><use href="#s-caret"/></svg></button>
          <button class="pair" aria-label="Drátový"><svg viewBox="0 0 20 20"><path d="M1 6l9-5 8 3v10l-8 5-9-4zl9 3 8-5M10 9v10" fill="#fff" stroke="#5795ab"/></svg><svg class="car"><use href="#s-caret"/></svg></button>
          <button class="pair" aria-label="Rozložení"><svg viewBox="0 0 20 20"><path d="M1 1h18v18H1z" fill="#22b8e0" stroke="#0b7ea4"/><path d="M11 1v9h8" fill="none" stroke="#0b6a8c"/></svg><svg class="car"><use href="#s-caret"/></svg></button>
          <button class="pair" aria-label="Přiblížit"><svg viewBox="0 0 20 20"><path d="M1 1h18v18H1z" fill="#57c4e2" stroke="#2888a8"/><circle cx="9.500" cy="9.500" r="7" fill="#b8a888" stroke="#e8dcb8" stroke-width="1.500"/><path d="M6 4h5l2 2v9H6z" fill="#f6d84c" stroke="#97700c"/><path d="M14 14l4 4" stroke="#173d60" stroke-width="2"/></svg><svg class="car"><use href="#s-caret"/></svg></button>
          <button class="pair" aria-label="Střed otáčení"><svg viewBox="0 0 20 20"><circle cx="8" cy="11" r="5" fill="none" stroke="#5a98b4" stroke-width="1.200"/><path d="M8 3v5M8 14v5M0 11h5M11 11h5M5 11h6M8 8v6" fill="none" stroke="#c82028" stroke-width="1.500"/><path d="M9 1q8 1 8 8" fill="none" stroke="#c82028" stroke-width="1.500" stroke-dasharray="5 1"/></svg><svg class="car"><use href="#s-caret"/></svg></button>
          <button class="pair" aria-label="Měření"><svg viewBox="0 0 20 20"><path d="M3 1v14M15 1v14M4 7h10M6 5L4 7l2 2M12 5l2 2-2 2" fill="none" stroke="#2e86a8" stroke-width="1.500"/><path d="M3 18h12" stroke="#c82028" stroke-width="2"/></svg><svg class="car"><use href="#s-caret"/></svg></button>
        </div>
        <p class="hint">Podržet &lt;F2&gt; pro dynamické prohlížení.<br>&lt;F8&gt; nebo &lt;Shift-roll&gt; pro nalezení dalšího platného nastavení filtru.</p>
      </div>
    </section>
  </main>
</div>
</body>
</html>
```
FILE: styles.css
```css
* { box-sizing: border-box; }
html, body { height: 100%; }
body { margin: 0; overflow: hidden; font: 14px/20px "Open Sans", "Noto Sans", sans-serif; color: #222; background: #e8e9eb; }
button { font: inherit; color: inherit; background: none; border: 0; padding: 0; margin: 0; white-space: nowrap; }
a { color: inherit; text-decoration: none; }
svg { flex: none; }
.defs { position: absolute; width: 0; height: 0; }
.app { height: 100vh; display: flex; flex-direction: column; }

.titlebar { display: flex; align-items: center; height: 35px; flex: none; overflow: hidden; }
.quick { display: flex; align-items: center; width: 212px; flex: none; padding-left: 2px; }
.quick button { width: 28px; height: 20px; }
.quick button svg { width: 20px; height: 20px; display: block; margin: 0 auto; }
.quick .logo { width: 20px; height: 20px; }
.quick .sep { width: 1px; height: 12px; background: #aaa; margin: 0 8px 0 3px; }
.quick .narrow { width: 19px; }
.quick .narrow svg { width: 12px; height: 14px; }
.menu { display: flex; }
.menu button { padding: 0 9px; }
.title { margin-left: auto; color: #999; white-space: nowrap; padding-right: 3px; }

.tabs { display: flex; align-items: stretch; height: 27px; flex: none; box-shadow: inset 0 -1px #bcc1c8; }
.tabs button { padding: 2px 12px 0; }
.tabs .file { width: 91px; color: #fff; background: #2a5fb4; border: 1px solid #17479c; box-shadow: inset 0 0 0 1px #4a8ae0; margin-right: 4px; padding-top: 0; }
.tabs .active { background: #fcfcfc; border: 1px solid #bcc1c8; border-bottom: 0; padding: 1px 10px 0; margin-right: 1px; }

.ribbon { display: flex; height: 116px; flex: none; background: #fcfcfc; border-bottom: 1px solid #bcc1c8; overflow: hidden; }
.group { display: flex; flex-direction: column; flex: none; padding-top: 5px; }
.g1 { width: 435px; padding-left: 6px; border-right: 1px solid #d0d4da; }
.g2 { width: 817px; padding-left: 3px; border-right: 1px solid #d0d4da; }
.g3 { width: 280px; padding-left: 4px; }
.tools { display: flex; height: 87px; }
.tools button { display: flex; flex-direction: column; align-items: center; text-align: center; flex: none; }
.tools svg { width: 40px; height: 40px; margin-bottom: 2px; }
.tools .cut { padding: 42px 0 0 4px; }
.caption { text-align: center; color: #7d7d7d; }
.g3 .caption { text-align: left; padding-left: 117px; }
.w42 { width: 42px; } .w44 { width: 44px; } .w50 { width: 50px; } .w58 { width: 58px; } .w60 { width: 60px; }
.w64 { width: 64px; } .w68 { width: 68px; } .w70 { width: 70px; } .w74 { width: 74px; } .w88 { width: 88px; }
.w90 { width: 90px; } .w98 { width: 98px; }

.work { flex: 1; display: flex; min-height: 0; padding-top: 5px; }
.manager { flex: 0 0 542px; display: flex; flex-direction: column; border-right: 2px solid #c3c8cf; }
.panel-title { display: flex; align-items: center; height: 26px; padding: 0 8px 0 5px; gap: 8px; }
.panel-title h2 { font: inherit; margin: 0; flex: 1; color: #444; }
.panel-title button { height: 14px; }
.panel-title svg { display: block; width: 16px; height: 13px; }
.panel-body { flex: 1; display: flex; min-height: 0; margin-right: 2px; border-top: 1px solid #bcc1c8; }
.side { width: 41px; flex: none; display: flex; flex-direction: column; border-right: 1px solid #bcc1c8; }
.side button { height: 60px; display: grid; place-items: center; }
.side svg { width: 32px; height: 32px; }
.side .on { height: 59px; background: #fcfcfc; border: 1px solid #bcc1c8; border-width: 0 0 1px 1px; margin-right: -1px; }
.tree { flex: 1; display: flex; flex-direction: column; min-width: 0; background: #fff; }
table { border-collapse: separate; border-spacing: 0; table-layout: fixed; width: 100%; }
th { height: 31px; padding: 3px 5px 0; text-align: left; font-weight: normal; background: #f0f4f8; border-bottom: 1px solid #bcc1c8; border-right: 1px solid #bcc1c8; }
.c1 { width: 358px; }
.c2 { width: 125px; }
td { height: 23px; padding: 0; border-right: 1px solid #d2d6e2; }
td:last-child { border-right: 0; }
tbody tr:nth-child(even) { background: #f5f5f5; }
.row { display: flex; align-items: center; height: 23px; white-space: nowrap; }
.row .ic { width: 18px; height: 18px; margin-right: 5px; }
.row .dn { width: 12px; height: 8px; margin-right: 8px; }
.row .rt { width: 8px; height: 12px; margin: 0 10px 0 2px; }
.row i { width: 20px; flex: none; }
.row b { width: 18px; margin-right: 5px; border-top: 1px dashed #ccc; flex: none; }
.row .bulb { width: 14px; height: 18px; margin: 0 3px; }
.root { padding-left: 5px; }
.l1 { padding-left: 3px; }
.l2 { padding-left: 21px; }
.l3 { padding-left: 39px; }
.navy { color: #14506e; }
.gray { color: #999; }
.quest { display: block; width: 16px; height: 19px; margin-left: 6px; }
.sel .row { margin-left: 36px; padding-left: 4px; border: 1px solid #c98a30; border-right: 0; background: #ffe08a; color: #000; }
.sel td:nth-child(2) { background: #ffe08a; border: 1px solid #c98a30; border-left: 0; }
.cur { color: #000; }
.stripes { flex: 1; background: repeating-linear-gradient(#f5f5f5 0 23px, #fff 23px 46px); }

.docs { flex: 1; min-width: 0; display: flex; flex-direction: column; }
.doctabs { display: flex; height: 27px; flex: none; box-shadow: inset 0 -1px #bcc1c8; overflow: hidden; }
.doctabs .chev { width: 6px; height: 26px; margin-right: -5px; }
.doc { display: flex; align-items: center; flex: none; padding: 2px 19px 0 38px; gap: 6px; white-space: nowrap; }
.doc button { width: 14px; height: 14px; }
.doc svg { display: block; width: 12px; height: 12px; margin: 1px; }
.doc.first { padding-left: 1px; }
.doc.active { background: #fcfcfc; border: 1px solid #bcc1c8; border-bottom: 0; padding: 0 30px 0 36px; }
.view { position: relative; flex: 1; min-height: 0; overflow: hidden; background: linear-gradient(#fff, #eee 17%, #d5d5d5 45%, #a0a0a0); }
.scene { position: absolute; inset: 0; width: 100%; height: 100%; }
.glyph { font-family: "Open Sans", sans-serif; }
.viewbar { position: relative; display: flex; align-items: center; height: 30px; padding-left: 209px; }
.viewbar button { display: flex; align-items: center; width: 20px; }
.viewbar button svg { width: 20px; height: 20px; }
.viewbar .pair { width: 47px; gap: 6px; }
.viewbar .pair .car { width: 10px; height: 6px; }
.viewbar .e1 { width: 45px; margin-left: 9px; }
.viewbar .e1 + .pair { width: 26px; }
.viewbar select { appearance: none; width: 167px; height: 26px; font: inherit; color: #222; border: 1px solid #bcc1c8; border-radius: 0; background: #fff conic-gradient(from -39deg at 50% 100%, #444 78deg, transparent 0) no-repeat; background-color: #fff; background: #fff linear-gradient(#444, #444) no-repeat right 7px top 10px / 7px 1px; padding: 0 3px; margin-right: 6px; }
.viewbar select { background: #fff conic-gradient(from 141deg at 50% 100%, #444 0 0) no-repeat right 7px top 10px / 0 0; background-image: conic-gradient(from -40deg at 50% 100%, #444 80deg, transparent 0); background-size: 7px 4px; }
.hint { position: relative; margin: 0; padding: 0 20px; margin-top: -2px; color: #000; white-space: nowrap; font-family: "Noto Sans", "Open Sans", sans-serif; }
```
